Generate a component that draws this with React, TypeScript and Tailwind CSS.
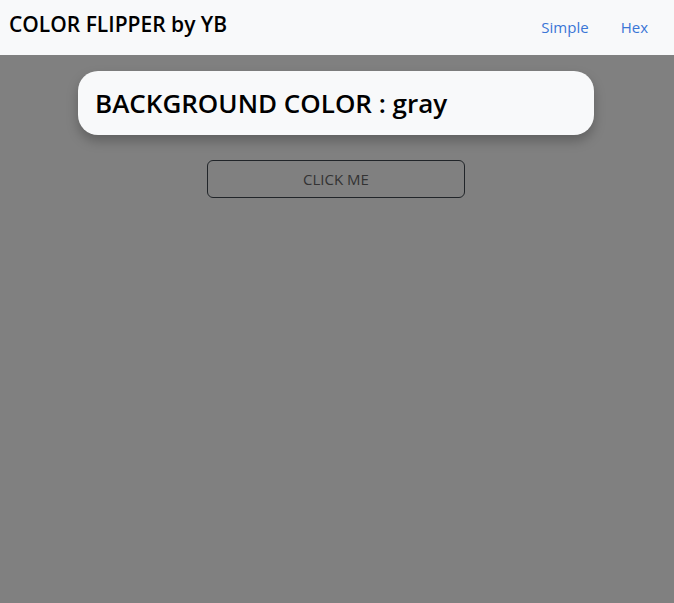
import React from "react";

export default function App() {
  return (
    <div
      className="min-h-[603px] w-full bg-[#808080]"
      style={{ fontFamily: '"Open Sans", "Noto Sans", sans-serif' }}
    >
      <nav className="flex h-[55px] items-center justify-between bg-[#f8f9fa] pl-[9px] pr-[26px]">
        <span className="mb-[6px] text-[21px] font-semibold text-black">COLOR FLIPPER by YB</span>
        <div className="flex items-center gap-[32px] text-[15px] text-[#3a76d6]">
          <span>Simple</span>
          <span>Hex</span>
        </div>
      </nav>
      <div className="flex flex-col items-center pt-[16px]">
        <div className="mr-[2px] flex h-[64px] w-[516px] items-center rounded-[20px] bg-[#f8f9fa] px-[17px] shadow-[0_6px_12px_rgba(0,0,0,0.25)]">
          <h2 className="text-[26px] font-semibold text-black">BACKGROUND COLOR : gray</h2>
        </div>
        <button className="mr-[2px] mt-[25px] h-[38px] w-[258px] rounded-[6px] border border-[#212529] text-[15px] text-[#333]">
          CLICK ME
        </button>
      </div>
    </div>
  );
}
